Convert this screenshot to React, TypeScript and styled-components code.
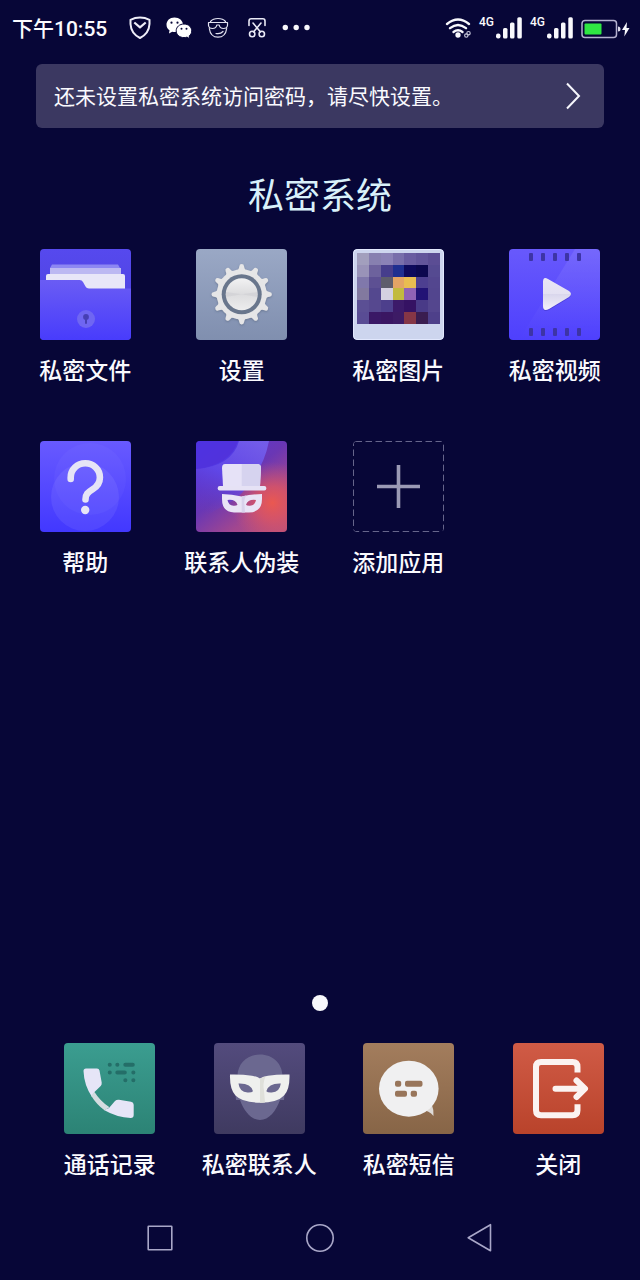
import React from "react";
import styled, { createGlobalStyle } from "styled-components";

const GlobalStyle = createGlobalStyle`
  * { box-sizing: border-box; }
  body {
    margin: 0;
    background: #070637;
    color: #fafafe;
    font-family: Roboto, "Noto Sans CJK SC", sans-serif;
  }
  button {
    border: 0;
    padding: 0;
    background: none;
    color: inherit;
    font: inherit;
    cursor: pointer;
  }
  svg { display: block; flex: none; }
`;

const Screen = styled.div`
  min-height: 100vh;
  display: flex;
  flex-direction: column;
`;

const StatusBar = styled.header`
  height: 55px;
  padding: 0 10px 0 12px;
  display: flex;
  align-items: center;
  justify-content: space-between;
`;

const Notifications = styled.div`
  display: flex;
  align-items: center;
  gap: 11px;
`;

const Clock = styled.time`
  margin-right: 8px;
  padding-top: 2px;
  font-size: 21px;
  line-height: 24px;
  font-weight: 500;
`;

const Indicators = styled.div`
  display: flex;
  align-items: center;
  gap: 8px;
`;

const SignalGroup = styled.div`
  display: flex;
  align-items: flex-start;
  justify-content: space-between;
  width: 43px;
`;

const Network = styled.span`
  font-size: 12px;
  line-height: 10px;
  font-weight: 500;
`;

const Banner = styled.button`
  margin: 9px 36px 0;
  min-height: 64px;
  padding: 0 22px 0 18px;
  display: flex;
  align-items: center;
  justify-content: space-between;
  border-radius: 6px;
  background: #3b3861;
  font-size: 21px;
  line-height: 32px;
  text-align: left;
`;

const BannerText = styled.span`
  padding-top: 2px;
`;

const Title = styled.h1`
  margin: 43px 0 26px;
  font-size: 36px;
  line-height: 52px;
  font-weight: 400;
  text-align: center;
  color: #d9f1fa;
`;

const AppGrid = styled.main`
  padding: 0 7px;
  display: grid;
  grid-template-columns: repeat(4, 1fr);
  row-gap: 53px;
`;

const Dock = styled.section`
  padding: 0 7px 0 35px;
  display: grid;
  grid-template-columns: repeat(4, 1fr);
`;

const AppButton = styled.button`
  display: flex;
  flex-direction: column;
  align-items: center;
  gap: 16px;
  font-size: 23px;
  line-height: 32px;
  font-weight: 500;
  white-space: nowrap;
`;

const Tile = styled.span<{ $fill?: string }>`
  width: 91px;
  height: 91px;
  border-radius: 4px;
  overflow: hidden;
  background: ${(p) => p.$fill ?? "transparent"};
`;

const PageIndicator = styled.div`
  flex: 1;
  display: flex;
  align-items: flex-end;
  justify-content: center;
  padding: 40px 0 32px;
`;

const PageDot = styled.span`
  width: 16px;
  height: 16px;
  border-radius: 50%;
  background: #f8f8fc;
`;

const NavBar = styled.nav`
  margin-top: 13px;
  height: 85px;
  padding: 0 12.5%;
  display: grid;
  grid-template-columns: repeat(3, 1fr);
`;

const NavButton = styled.button`
  display: flex;
  align-items: center;
  justify-content: center;
`;

const Art = ({ children }: { children: React.ReactNode }) => (
  <svg width="91" height="91" viewBox="0 0 91 91" fill="none" aria-hidden="true">
    {children}
  </svg>
);

const FilesArt = () => (
  <Art>
    <defs>
      <linearGradient id="folder" x1="0" y1="0" x2="0" y2="1">
        <stop offset="0" stopColor="#6a5cf4" />
        <stop offset="1" stopColor="#483cfc" />
      </linearGradient>
    </defs>
    <path d="M12 15.500h66l2 3.500v30H10V19z" fill="#8d87f2" />
    <path d="M10 19h71v30H10z" fill="#bcb8f2" />
    <path d="M8 25h75q2 0 2 2v22H6V27q0-2 2-2z" fill="#e8e6f8" />
    <path d="M0 31h39.500q2.500 0 3.500 2l2.500 4.500q1 2 3.500 2h42V91H0z" fill="url(#folder)" />
    <circle cx="46" cy="70" r="9" fill="#6f66f2" />
    <circle cx="46" cy="68" r="2.900" fill="#463fb4" />
    <path d="M46 68v6" stroke="#463fb4" strokeWidth="2" strokeLinecap="round" />
  </Art>
);

const teeth = Array.from({ length: 12 }, (_, i) => i * 30);

const SettingsArt = () => (
  <Art>
    <defs>
      <linearGradient id="knob" x1="0" y1="0" x2="0" y2="1">
        <stop offset="0" stopColor="#f2f2f3" />
        <stop offset="0.5" stopColor="#dcdcde" />
        <stop offset="1" stopColor="#ededee" />
      </linearGradient>
      <filter id="gearShadow" x="-20%" y="-20%" width="140%" height="140%">
        <feDropShadow dx="0" dy="1" stdDeviation="1" floodColor="#54627c" floodOpacity="0.6" />
      </filter>
    </defs>
    <g fill="#e6e6e7" filter="url(#gearShadow)">
      <circle cx="45.7" cy="45.3" r="25" />
      {teeth.map((a) => (
        <path
          key={a}
          d="M39.700 22q3.300-1 3.600-4.500.2-2.400 2.400-2.400t2.400 2.400q.3 3.500 3.600 4.500z"
          transform={`rotate(${a} 45.7 45.3)`}
        />
      ))}
    </g>
    <circle cx="45.7" cy="45.3" r="20" fill="#69768c" />
    <circle cx="45.7" cy="45.3" r="16" fill="url(#knob)" />
    <path d="M45.700 45.300 30 43v5zM45.700 45.300 61.400 43v5z" fill="#c9c9cc" opacity="0.4" />
  </Art>
);

const mosaic = [
  ["#a29fbd", "#8780b0", "#8b82b7", "#796fab", "#6a5da1", "#62559b", "#5b4d94"],
  ["#9993b8", "#6d629d", "#463d8c", "#1f2f90", "#0e0a5c", "#0c084f", "#554a91"],
  ["#8078ab", "#5d5093", "#5e5d6c", "#e3a465", "#e9bd51", "#4d3f90", "#53468f"],
  ["#82799f", "#54488f", "#d5d1e1", "#c2ba3f", "#8f62b5", "#221375", "#52458e"],
  ["#5b4f94", "#56488f", "#4d3f8c", "#3c1a69", "#351263", "#493a87", "#54468e"],
  ["#594c94", "#3a1866", "#3a1662", "#3d1b65", "#853646", "#3a1d50", "#4e408a"],
];

const PhotosArt = () => (
  <Art>
    <rect width="91" height="91" rx="4" fill="#cdd5ee" />
    <rect x="0.5" y="0.5" width="90" height="90" rx="4" stroke="#e2e8fd" />
    <g shapeRendering="crispEdges">
      {mosaic.map((row, y) =>
        row.map((color, x) => (
          <rect key={`${x}-${y}`} x={4 + x * 11.85} y={4 + y * 11.8} width="12" height="12" fill={color} />
        )),
      )}
    </g>
  </Art>
);

const filmHoles = [20, 32, 44, 56, 68];

const VideoArt = () => (
  <Art>
    <defs>
      <linearGradient id="play" x1="0" y1="0" x2="0" y2="1">
        <stop offset="0" stopColor="#e9e6f5" />
        <stop offset="0.5" stopColor="#e4e1f2" />
        <stop offset="0.5" stopColor="#d9d6ec" />
        <stop offset="1" stopColor="#f3f1fa" />
      </linearGradient>
      <linearGradient id="sheen" x1="0" y1="0" x2="0" y2="1">
        <stop offset="0" stopColor="#fff" stopOpacity="0.09" />
        <stop offset="1" stopColor="#fff" stopOpacity="0" />
      </linearGradient>
    </defs>
    <path d="M66 0h25v91H10z" fill="url(#sheen)" />
    {filmHoles.map((x) => (
      <g key={x} fill="#3d34a6">
        <rect x={x} y="4" width="4" height="8" rx="1" />
        <rect x={x} y="79" width="4" height="8" rx="1" />
      </g>
    ))}
    <path d="M34 33q0-6 5-3l21 12q4 3 0 6L40 60q-6 3-6-3z" fill="#2f269e" opacity="0.35" transform="translate(0 1)" />
    <path d="M34 33q0-6 5-3l21 12q4 3 0 6L40 60q-6 3-6-3z" fill="url(#play)" />
  </Art>
);

const HelpArt = () => (
  <Art>
    <circle cx="50" cy="38" r="36" fill="#fff" opacity="0.03" />
    <circle cx="45" cy="56" r="34" fill="#fff" opacity="0.07" />
    <path
      d="M30.700 38v-1.500a14.600 14.200 0 0 1 29.200 0c0 5.500-2.700 9-7.200 11.800-5 3.200-7.200 5-7.200 10.200"
      stroke="#e6e4f6"
      strokeWidth="6.600"
      strokeLinecap="round"
    />
    <circle cx="45.200" cy="69" r="4.200" fill="#e6e4f6" />
  </Art>
);

const DisguiseArt = () => (
  <Art>
    <defs>
      <linearGradient id="disguise" x1="0.1" y1="0" x2="0.9" y2="1">
        <stop offset="0" stopColor="#5634de" />
        <stop offset="0.45" stopColor="#6a37b4" />
        <stop offset="0.75" stopColor="#a2478f" />
        <stop offset="1" stopColor="#b84f7c" />
      </linearGradient>
      <radialGradient id="glow" cx="0.84" cy="0.68" r="0.45">
        <stop offset="0" stopColor="#ea5850" />
        <stop offset="0.4" stopColor="#dd5562" stopOpacity="0.8" />
        <stop offset="1" stopColor="#d05570" stopOpacity="0" />
      </radialGradient>
      <linearGradient id="beam" x1="0.8" y1="0" x2="0.3" y2="1">
        <stop offset="0" stopColor="#7562f0" />
        <stop offset="0.5" stopColor="#5f49ec" />
        <stop offset="1" stopColor="#5a3ad0" stopOpacity="0" />
      </linearGradient>
    </defs>
    <path d="M0 0h91v91H0z" fill="url(#disguise)" />
    <path d="M0 0h91v91H0z" fill="url(#glow)" />
    <path d="M42 0h31Q67 32 40 58L0 80V28Q34 24 42 0z" fill="url(#beam)" opacity="0.85" />
    <path d="M0 0h43Q36 25 0 28z" fill="#4c32e2" opacity="0.75" />
    <path d="M29 23h32q4 0 4 4l-1 18H27l-1-18q0-4 3-4z" fill="#e6e2f7" />
    <path d="M45.700 23H61q4 0 4 4l-1 18H45.700z" fill="#d6d3ef" />
    <rect x="21.700" y="45" width="48.600" height="4.500" rx="2" fill="#e6e2f5" />
    <path
      fillRule="evenodd"
      d="M26 53q10 0 19.700 2.500Q56 53 66 53v5q0 13-13 13.500h-15Q26 71 26 58zM31.500 59q1 5.500 6 5.800 3 .2 4-1-2-5.800-10-4.800zM60 59q-1 5.500-6 5.800-3 .2-4-1 2-5.800 10-4.800z"
      fill="#e9e4f6"
    />
    <path d="M45.700 55.500 50 54.500q-2.500 5-1.500 9l.5 8h-3.300z" fill="#d8d2ec" />
  </Art>
);

const AddArt = () => (
  <Art>
    <rect x="0.5" y="0.5" width="90" height="90" rx="2" stroke="#66658b" strokeDasharray="6.500 3.500" />
    <path d="M45.500 24v43M24 45.500h43" stroke="#9b9ab5" strokeWidth="3.600" />
  </Art>
);

const CallArt = () => (
  <Art>
    <path d="M22 25.500h11q2 0 2.500 2l2.200 12q.3 2-1 3.500L30.500 49 28 54Q20 42 19.500 28q0-2.500 2.500-2.500z" fill="#e6e5f7" />
    <path d="M45 65 51 58q1.500-1.600 4-1.300l12 2q2.700.6 2.700 3V72q0 3-3 3Q53 74.500 40 67z" fill="#e6e5f7" />
    <path d="M27 52.500q5.500 9 13.500 14.800l5-3Q36 58 30.500 49z" fill="#d4dce0" />
    <g stroke="#246e68" strokeWidth="4" strokeLinecap="round">
      <path d="M45.700 21.700h.1M53.300 21.700h.1M61.300 21.700h7.500M45.700 29.500h.1M53.300 29.500h7.500M69.300 29.500h.1M61.300 37.300h.1M69.300 37.300h.1" />
    </g>
  </Art>
);

const MaskArt = () => (
  <Art>
    <path d="M46 11.500c13 0 22 9 22.500 21 0 5 .5 9 2.500 12l-1 12.500h-4C62 68 55 77 46 77S30 68 26 57h-4l-1-12.500c2-3 2.500-7 2.500-12 .5-12 9.500-21 22.500-21z" fill="#6b6890" />
    <path
      fillRule="evenodd"
      d="M16 31.500q12-.3 22 1.200 5 .8 8 2.800 3-2 8-2.800 10-1.500 21.500-1.200.5 15-5.500 21-6.500 7.200-24 7.200T21.500 52.500Q15.500 46 16 31.500zM24.500 40.500q1 8.500 9 9 4 .3 5.500-1.200Q37 40 24.500 40.500zM66.800 40.500q-1 8.500-9 9-4 .3-5.500-1.200Q54.500 40 66.800 40.500z"
      fill="#eff0ee"
    />
    <path d="M46 35.500 51.500 33.500q-3 7-1.500 14l1 12q-2 .2-5 .2z" fill="#dfe0da" />
  </Art>
);

const MessageArt = () => (
  <Art>
    <path d="M59 67q7 .5 11.500 6 .4-6.500-2-12.500z" fill="#dedbd8" />
    <ellipse cx="45.800" cy="45.700" rx="29.800" ry="28" fill="#f0f0f1" />
    <g fill="#98755a">
      <rect x="32" y="37.700" width="6.200" height="6" rx="2" />
      <rect x="42" y="37.700" width="17.500" height="6" rx="2" />
      <rect x="32" y="47.700" width="12" height="6" rx="2" />
      <rect x="47.700" y="47.700" width="6.300" height="6" rx="2" />
    </g>
  </Art>
);

const CloseArt = () => (
  <Art>
    <g stroke="#fbf3f1" strokeWidth="6" strokeLinejoin="round">
      <path d="M64.500 29.500V24q0-5-5-5H28q-5 0-5 5v43.300q0 5 5 5h31.500q5 0 5-5v-6" />
      <path d="M42.500 45.700H71M63.500 37.500l8.500 8.200-8.500 8.300" strokeLinecap="round" />
    </g>
  </Art>
);

type App = { label: string; fill?: string; art: React.ReactNode };

const apps: App[] = [
  { label: "私密文件", fill: "linear-gradient(#5649ee, #4a40d8)", art: <FilesArt /> },
  { label: "设置", fill: "linear-gradient(#9aa8c5, #808faf)", art: <SettingsArt /> },
  { label: "私密图片", art: <PhotosArt /> },
  { label: "私密视频", fill: "linear-gradient(#6859fc, #4e40fd)", art: <VideoArt /> },
  { label: "帮助", fill: "linear-gradient(#685aff, #4238ff)", art: <HelpArt /> },
  { label: "联系人伪装", art: <DisguiseArt /> },
  { label: "添加应用", art: <AddArt /> },
];

const dockApps: App[] = [
  { label: "通话记录", fill: "linear-gradient(#3b9d90, #2c8375)", art: <CallArt /> },
  { label: "私密联系人", fill: "linear-gradient(#534b7d, #3f3a60)", art: <MaskArt /> },
  { label: "私密短信", fill: "linear-gradient(#a37d5d, #876547)", art: <MessageArt /> },
  { label: "关闭", fill: "linear-gradient(#d05b46, #b9432b)", art: <CloseArt /> },
];

const AppItem = ({ label, fill, art }: App) => (
  <AppButton type="button">
    <Tile $fill={fill}>{art}</Tile>
    <span>{label}</span>
  </AppButton>
);

const Signal = () => (
  <SignalGroup>
    <Network>4G</Network>
    <svg width="26" height="22" viewBox="0 0 26 22" fill="#f8f8fc" aria-hidden="true">
      <rect x="0" y="16.500" width="4.500" height="5" rx="2" />
      <rect x="7" y="11" width="4.500" height="10.500" rx="1.500" />
      <rect x="14" y="5.500" width="4.500" height="16" rx="1.500" />
      <rect x="21.300" y="0.300" width="4.500" height="21.200" rx="1.500" />
    </svg>
  </SignalGroup>
);

const ShieldIcon = () => (
  <svg width="28" height="24" viewBox="0 0 28 24" fill="none" stroke="#eeeef8" strokeWidth="2" strokeLinejoin="round" aria-hidden="true">
    <path d="M14 1.500q5 0 9.500 2.300v4.200Q23 17.500 14 22 5 17.500 4.500 8V3.800Q9 1.500 14 1.500z" />
    <path d="m8.300 6.500 5.700 4.800 5.700-4.800" strokeWidth="2.200" />
  </svg>
);

const WechatIcon = () => (
  <svg width="28" height="24" viewBox="0 0 28 24" aria-hidden="true">
    <path d="M9.500 1.500c-4.800 0-8 3.200-8 7.200 0 2.400 1.200 4.300 3 5.600L4 17.500l3.200-1.700q5 1 7.800-1.300 3-2.500 3-5.800c0-4-3.700-7.200-8.500-7.200z" fill="#fff" />
    <path d="M19 8c-4.400 0-7.800 2.900-7.800 6.800s3.400 6.800 7.800 6.800q1.500 0 3-.5l2.800 1.700-.6-2.900c1.600-1.200 2.500-3 2.500-5.100C26.700 10.900 23.400 8 19 8z" fill="#fff" stroke="#070637" />
    <g fill="#070637">
      <circle cx="6.500" cy="6.700" r="1.100" />
      <circle cx="12.500" cy="6.700" r="1.100" />
      <circle cx="16.500" cy="12.800" r="1" />
      <circle cx="21.500" cy="12.800" r="1" />
    </g>
  </svg>
);

const FaceIcon = () => (
  <svg width="28" height="24" viewBox="0 0 28 24" fill="none" stroke="#e2e2f0" strokeWidth="1.200" strokeLinecap="round" strokeLinejoin="round" aria-hidden="true">
    <path d="M6.500 5.500Q9 2.500 14 2.500t7.500 3M5.300 12.500Q6.500 21.200 14 21.200t8.700-8.700" />
    <path d="M4.500 6.500h19M4.500 6.500v3q.5 3 4 3 3.700 0 4.300-3.500h2.400q.6 3.500 4.300 3.500 3.500 0 4-3v-3" />
    <path d="M12 17.500q4.500.8 7-2" />
  </svg>
);

const ScissorsIcon = () => (
  <svg width="28" height="24" viewBox="0 0 28 24" fill="none" stroke="#eaeaf6" strokeWidth="1.600" strokeLinecap="round" strokeLinejoin="round" aria-hidden="true">
    <path d="M6 9.500V5q0-2.200 2.200-2.200h11.600Q22 2.800 22 5v4.500" />
    <path d="m10 7 7.500 9M18 7l-7.500 9" />
    <circle cx="9.200" cy="18" r="2.700" />
    <circle cx="18.800" cy="18" r="2.700" />
  </svg>
);

const MoreIcon = () => (
  <svg width="28" height="24" viewBox="0 0 28 24" fill="#f8f8fc" aria-hidden="true">
    <circle cx="3.300" cy="11.500" r="2.700" />
    <circle cx="14.200" cy="11.500" r="2.700" />
    <circle cx="25" cy="11.500" r="2.700" />
  </svg>
);

const WifiIcon = () => (
  <svg width="27" height="22" viewBox="0 0 27 22" fill="none" stroke="#f8f8fc" strokeWidth="2.300" strokeLinecap="round" aria-hidden="true">
    <path d="M3 7Q14 -2 25 7M6 11.200q8-6.500 16 0M9.500 15q4.500-3.500 9 0" />
    <circle cx="14" cy="18" r="1.500" fill="#f8f8fc" />
    <g strokeWidth="1.100" stroke="#c9c9dd">
      <circle cx="22.300" cy="18.600" r="1.700" />
      <circle cx="24.500" cy="16.200" r="1.700" />
    </g>
  </svg>
);

const BatteryIcon = () => (
  <svg width="49" height="22" viewBox="0 0 49 22" fill="none" aria-hidden="true">
    <rect x="1" y="3.500" width="34.500" height="17" rx="3" stroke="#b4b1cf" strokeWidth="1.500" />
    <rect x="3.500" y="6.500" width="17" height="11" rx="1" fill="#2fe743" />
    <path d="M37 9.500q2.500 0 2.500 2.500T37 14.500z" fill="#dcdbea" />
    <path d="m46 5-5 8h3l-.7 6.500 5.200-8.500h-3z" fill="#f8f8fc" />
  </svg>
);

export default function App() {
  return (
    <>
      <GlobalStyle />
      <Screen lang="zh-CN">
        <StatusBar>
          <Notifications>
            <Clock dateTime="22:55">下午10:55</Clock>
            <ShieldIcon />
            <WechatIcon />
            <FaceIcon />
            <ScissorsIcon />
            <MoreIcon />
          </Notifications>
          <Indicators>
            <WifiIcon />
            <Signal />
            <Signal />
            <BatteryIcon />
          </Indicators>
        </StatusBar>

        <Banner type="button">
          <BannerText>还未设置私密系统访问密码，请尽快设置。</BannerText>
          <svg width="18" height="30" viewBox="0 0 18 30" fill="none" stroke="#f6f6fc" strokeWidth="2" aria-hidden="true">
            <path d="m3 2.500 12 12.500L3 27.500" />
          </svg>
        </Banner>

        <Title>私密系统</Title>

        <AppGrid>
          {apps.map((app) => (
            <AppItem key={app.label} {...app} />
          ))}
        </AppGrid>

        <PageIndicator>
          <PageDot />
        </PageIndicator>

        <Dock>
          {dockApps.map((app) => (
            <AppItem key={app.label} {...app} />
          ))}
        </Dock>

        <NavBar>
          <NavButton type="button" aria-label="最近任务">
            <svg width="30" height="30" viewBox="0 0 30 30" fill="none" stroke="#a9a7c8" strokeWidth="1.600">
              <rect x="3.200" y="3.200" width="23.600" height="23.600" rx="0.500" />
            </svg>
          </NavButton>
          <NavButton type="button" aria-label="主屏幕">
            <svg width="30" height="30" viewBox="0 0 30 30" fill="none" stroke="#a9a7c8" strokeWidth="1.600">
              <circle cx="15" cy="15" r="13.200" />
            </svg>
          </NavButton>
          <NavButton type="button" aria-label="返回">
            <svg width="30" height="30" viewBox="0 0 30 30" fill="none" stroke="#a9a7c8" strokeWidth="1.600" strokeLinejoin="round">
              <path d="M25.500 1.700v26L3.200 14.700z" />
            </svg>
          </NavButton>
        </NavBar>
      </Screen>
    </>
  );
}
